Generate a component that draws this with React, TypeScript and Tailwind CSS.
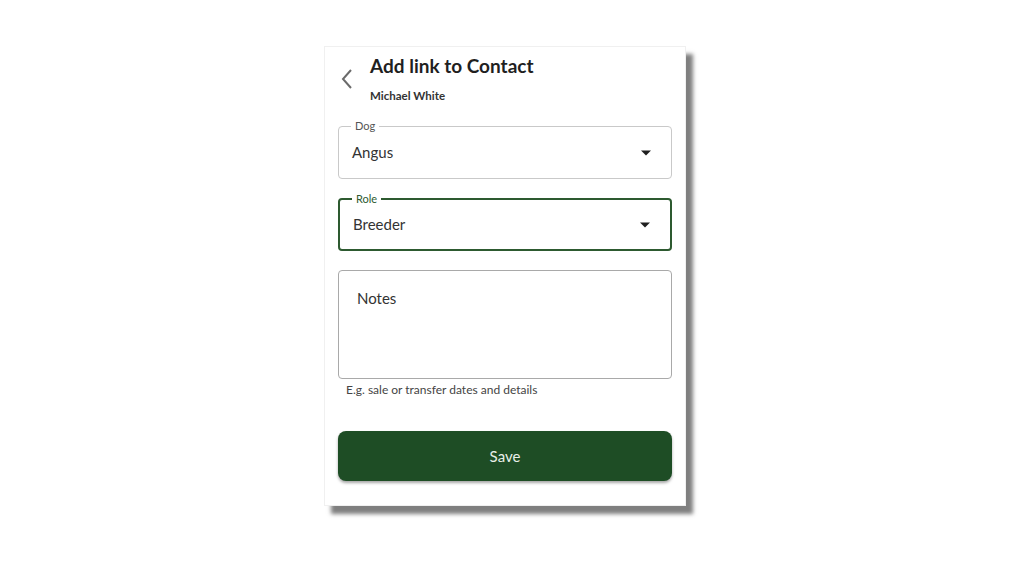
import React from 'react';

function Caret() {
    return (
        <svg width="10" height="6" viewBox="0 0 10 5" className="shrink-0">
            <path d="M0 0 L10 0 L5 5 Z" fill="#1f1f1f" />
        </svg>
    );
}

interface SelectProps {
    label: string;
    value: string;
    focused?: boolean;
}

function SelectField({ label, value, focused }: SelectProps) {
    return (
        <div
            className={`relative h-[53px] rounded-[4px] flex items-center justify-between pl-[13px] pr-[20px] ${
                focused ? 'border-2 border-[#2d5a30]' : 'border border-[#c9c9c9]'
            }`}
        >
            <span
                className={`absolute -top-[9px] left-[12px] bg-white px-[4px] text-[11px] leading-[16px] ${
                    focused ? 'text-[#2d5a30]' : 'text-[#555]'
                }`}
            >
                {label}
            </span>
            <span className="text-[15px] text-[#333]">{value}</span>
            <Caret />
        </div>
    );
}

export default function App() {
    return (
        <div
            className="w-[1024px] h-[576px] bg-white flex"
            style={{ fontFamily: 'Lato, "Noto Sans", sans-serif' }}
        >
            <div className="ml-[324px] mt-[46px] w-[362px] h-[460px] bg-white border border-[#f0f0f0] shadow-[7px_8px_4px_rgba(0,0,0,0.5)] px-[13px]">
                <div className="flex pt-[7px]">
                    <button className="w-[32px] pt-[14px] pl-[2px] self-start">
                        <svg width="14" height="22" viewBox="0 0 14 22" fill="none">
                            <path d="M11 2 L3 11 L11 20" stroke="#6b6b6b" strokeWidth="2" />
                        </svg>
                    </button>
                    <div>
                        <h1 className="text-[19px] font-bold text-[#1f1f1f] leading-[24px]">Add link to Contact</h1>
                        <div className="mt-[11px] text-[11.5px] font-bold text-[#333] leading-[14px]">Michael White</div>
                    </div>
                </div>

                <div className="mt-[23px] flex flex-col gap-[19px]">
                    <SelectField label="Dog" value="Angus" />
                    <SelectField label="Role" value="Breeder" focused />
                    <div>
                        <div className="h-[109px] rounded-[4px] border border-[#a9a9a9] px-[18px] pt-[15px]">
                            <span className="text-[15px] text-[#333]">Notes</span>
                        </div>
                        <div className="mt-[3px] pl-[8px] text-[12px] text-[#444] leading-[16px]">
                            E.g. sale or transfer dates and details
                        </div>
                    </div>
                </div>

                <button className="mt-[33px] w-full h-[50px] rounded-[8px] bg-[#1e4d25] text-[#e8efe8] text-[15px] shadow-[0_2px_3px_rgba(0,0,0,0.35)]">
                    Save
                </button>
            </div>
        </div>
    );
}
